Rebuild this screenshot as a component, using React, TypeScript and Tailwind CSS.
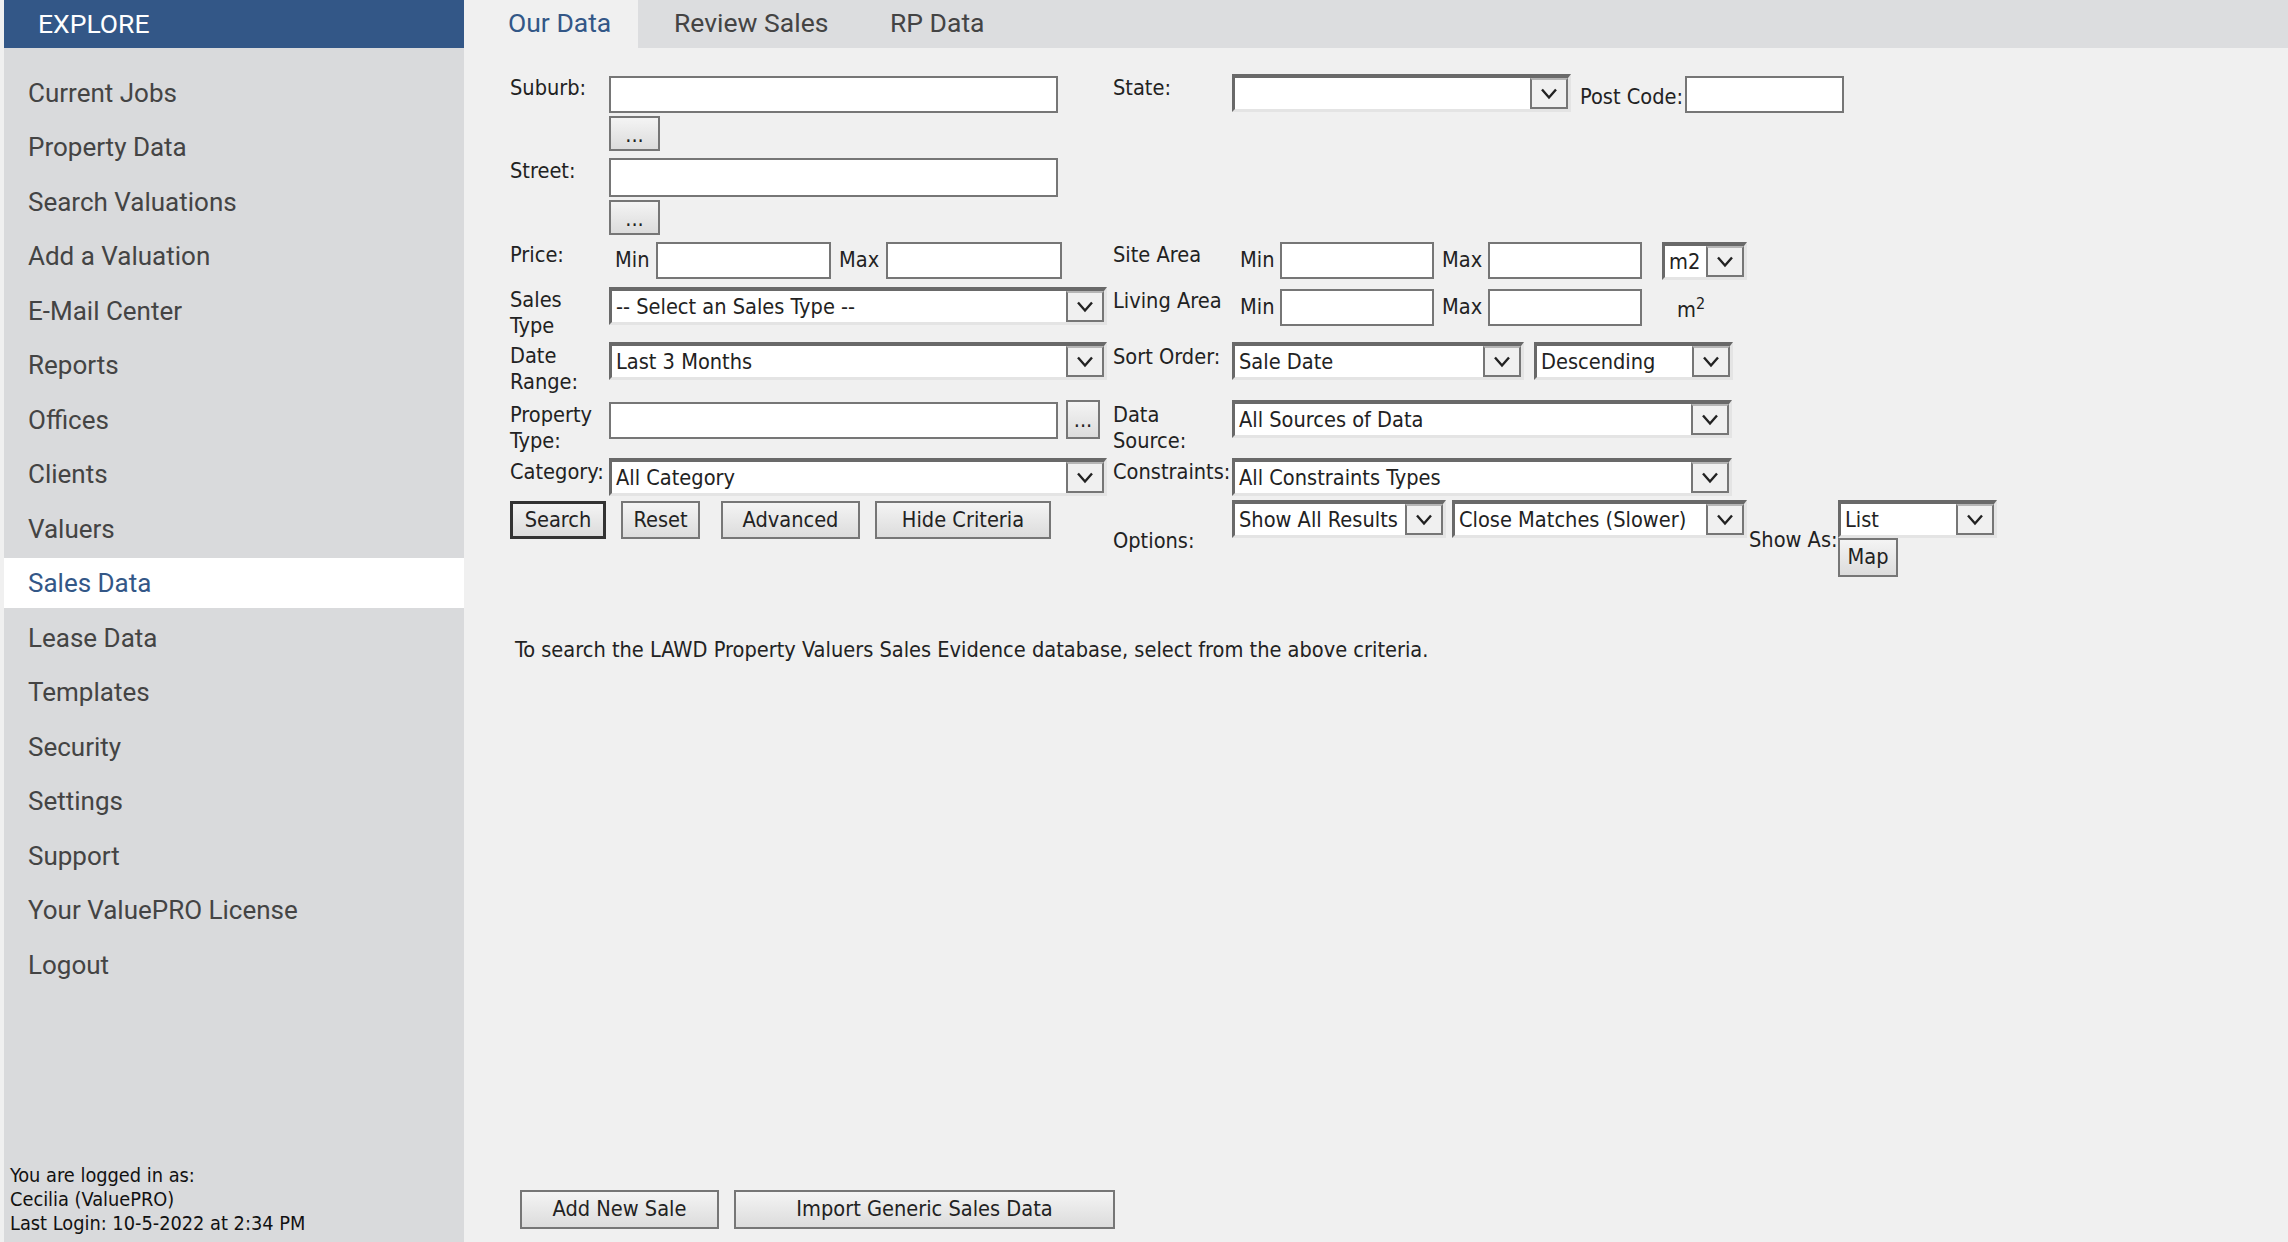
const menu = [
  "Current Jobs",
  "Property Data",
  "Search Valuations",
  "Add a Valuation",
  "E-Mail Center",
  "Reports",
  "Offices",
  "Clients",
  "Valuers",
  "Sales Data",
  "Lease Data",
  "Templates",
  "Security",
  "Settings",
  "Support",
  "Your ValuePRO License",
  "Logout",
];

function Chevron() {
  return (
    <svg width="20" height="13" viewBox="0 0 20 13" fill="none">
      <path d="M3 2.5 L10 10.5 L17 2.5" stroke="#222" strokeWidth="2.4" />
    </svg>
  );
}

function Select({ text, width, arrow = "w-[38px]" }: { text?: string; width: string; arrow?: string }) {
  return (
    <div className={`${width} h-[38px] shrink-0 flex bg-white border-[3px] border-t-[4px] border-l-[3px] border-t-[#696969] border-l-[#696969] border-r-[#e4e4e4] border-b-[#e4e4e4]`}>
      <div className="flex-1 pl-[4px] leading-[31px] whitespace-nowrap overflow-hidden">{text}</div>
      <div className={`${arrow} shrink-0 flex items-center justify-center bg-[#f0f0f0] border-2 border-t-[#b5b5b5] border-[#767676]`}>
        <Chevron />
      </div>
    </div>
  );
}

function Input({ width }: { width: string }) {
  return <input className={`${width} h-[37px] shrink-0 bg-white border-2 border-[#767676] outline-none`} />;
}

function Btn({ children, className }: { children: React.ReactNode; className: string }) {
  return (
    <button className={`${className} shrink-0 border-2 border-[#767676] bg-gradient-to-b from-[#f4f4f4] to-[#dcdcdc] text-center text-[#222]`}>
      {children}
    </button>
  );
}

function Row({ height, left, center, right, rest }: { height: string; left: React.ReactNode; center: React.ReactNode; right: React.ReactNode; rest: React.ReactNode }) {
  return (
    <div className={`${height} flex`}>
      <div className="w-[99px] shrink-0 leading-[26px]">{left}</div>
      <div className="w-[504px] shrink-0">{center}</div>
      <div className="w-[119px] shrink-0 leading-[26px] whitespace-nowrap">{right}</div>
      <div className="flex-1">{rest}</div>
    </div>
  );
}

function MinMax({ width }: { width: string }) {
  return (
    <div className="flex items-center">
      <span className="w-[40px]">Min</span>
      <Input width={width} />
      <span className="w-[54px] pl-[8px]">Max</span>
      <Input width={width} />
    </div>
  );
}

export default function App() {
  return (
    <div className="w-[2288px] h-[1242px] flex overflow-hidden bg-[#f0f0f0] pl-[4px] font-['DejaVu_Sans_Condensed','DejaVu_Sans',sans-serif] text-[21.6px] text-[#222]">
      <aside className="w-[460px] shrink-0 flex flex-col bg-[#d9dadc]">
        <div className="h-[48px] shrink-0 bg-[#335787] pl-[34px] flex items-center font-['Roboto',sans-serif] text-[26.5px] text-white">EXPLORE</div>
        <nav className="pt-[19px] flex flex-col gap-[4.5px] font-['Roboto',sans-serif] text-[26px]">
          {menu.map((m) => (
            <div key={m} className={`h-[50px] pl-[24px] pt-[2px] flex items-center ${m === "Sales Data" ? "bg-white text-[#335787]" : "text-[#444]"}`}>
              {m}
            </div>
          ))}
        </nav>
        <div className="mt-auto pl-[6px] pb-[6px] text-[19.8px] leading-[24px] text-[#111]">
          <div>You are logged in as:</div>
          <div>Cecilia (ValuePRO)</div>
          <div>Last Login: 10-5-2022 at 2:34 PM</div>
        </div>
      </aside>

      <main className="flex-1 flex flex-col">
        <div className="h-[48px] shrink-0 flex bg-[#dcdddf] font-['Roboto',sans-serif] text-[26.5px] text-[#444]">
          <div className="w-[174px] pl-[44px] pb-[2px] flex items-center bg-[#f0f0f0] text-[#335787]">Our Data</div>
          <div className="w-[216px] pl-[36px] pb-[2px] flex items-center">Review Sales</div>
          <div className="pl-[36px] pb-[2px] flex items-center">RP Data</div>
        </div>

        <form className="pt-[26px] pl-[46px]">
          <Row
            height="h-[84px]"
            left={<div className="pt-[1px]">Suburb:</div>}
            center={
              <div className="pt-[2px] flex flex-col gap-[3px]">
                <Input width="w-[449px]" />
                <Btn className="w-[51px] h-[35px] leading-[34px]">...</Btn>
              </div>
            }
            right={<div className="pt-[1px]">State:</div>}
            rest={
              <div className="flex items-start">
                <Select width="w-[339px]" />
                <span className="pl-[9px] pt-[7px] w-[114px] whitespace-nowrap">Post Code:</span>
                <div className="pt-[2px]">
                  <Input width="w-[159px]" />
                </div>
              </div>
            }
          />
          <Row
            height="h-[84px]"
            left={<div>Street:</div>}
            center={
              <div className="flex flex-col gap-[3px]">
                <Input width="w-[449px] !h-[39px]" />
                <Btn className="w-[51px] h-[35px] leading-[34px]">...</Btn>
              </div>
            }
            right={null}
            rest={null}
          />
          <Row
            height="h-[45px]"
            left={<div>Price:</div>}
            center={
              <div className="pl-[6px] flex items-center">
                <span className="w-[41px]">Min</span>
                <Input width="w-[175px]" />
                <span className="w-[55px] pl-[8px]">Max</span>
                <Input width="w-[176px]" />
              </div>
            }
            right="Site Area"
            rest={
              <div className="pl-[8px] flex items-start">
                <MinMax width="w-[154px]" />
                <div className="pl-[20px]">
                  <Select width="w-[85px]" arrow="w-[38px]" text="m2" />
                </div>
              </div>
            }
          />
          <Row
            height="h-[55px]"
            left={<div>Sales<br />Type</div>}
            center={<Select width="w-[498px]" text="-- Select an Sales Type --" />}
            right={<div className="pt-[1px]">Living Area</div>}
            rest={
              <div className="pl-[8px] pt-[1px] flex items-center">
                <MinMax width="w-[154px]" />
                <span className="pl-[35px] pt-[6px]">m<sup className="text-[16px]">2</sup></span>
              </div>
            }
          />
          <Row
            height="h-[58px]"
            left={<div className="pt-[1px]">Date<br />Range:</div>}
            center={<Select width="w-[498px]" text="Last 3 Months" />}
            right={<div className="pt-[2px]">Sort Order:</div>}
            rest={
              <div className="flex gap-[10px]">
                <Select width="w-[292px]" text="Sale Date" />
                <Select width="w-[199px]" text="Descending" />
              </div>
            }
          />
          <Row
            height="h-[58px]"
            left={<div className="pt-[2px]">Property<br />Type:</div>}
            center={
              <div className="flex items-start gap-[8px] pt-[2px]">
                <Input width="w-[449px]" />
                <Btn className="w-[34px] h-[39px] -mt-[2px] leading-[36px]">...</Btn>
              </div>
            }
            right={<div className="pt-[2px]">Data<br />Source:</div>}
            rest={<Select width="w-[500px]" text="All Sources of Data" />}
          />
          <Row
            height="h-[42px]"
            left={<div className="pt-[1px]">Category:</div>}
            center={<Select width="w-[498px]" text="All Category" />}
            right={<div className="pt-[1px]">Constraints:</div>}
            rest={<Select width="w-[500px]" text="All Constraints Types" />}
          />
          <Row
            height="h-[78px]"
            left={
              <div className="pt-[1px]">
                <Btn className="w-[96px] h-[38px] !border-[3px] !border-[#333]">Search</Btn>
              </div>
            }
            center={
              <div className="pl-[12px] pt-[1px] flex">
                <Btn className="w-[79px] h-[38px]">Reset</Btn>
                <Btn className="w-[139px] h-[38px] ml-[21px]">Advanced</Btn>
                <Btn className="w-[176px] h-[38px] ml-[15px]">Hide Criteria</Btn>
              </div>
            }
            right={<div className="pt-[28px]">Options:</div>}
            rest={
              <div className="flex items-start">
                <Select width="w-[214px]" arrow="w-[38px]" text="Show All Results" />
                <div className="ml-[6px]">
                  <Select width="w-[295px]" text="Close Matches (Slower)" />
                </div>
                <span className="pl-[2px] pt-[24px] w-[91px] whitespace-nowrap">Show As:</span>
                <div className="flex flex-col">
                  <Select width="w-[159px]" text="List" />
                  <Btn className="w-[60px] h-[39px]">Map</Btn>
                </div>
              </div>
            }
          />
        </form>

        <p className="pl-[51px] pt-[59px] leading-[26px]">
          To search the LAWD Property Valuers Sales Evidence database, select from the above criteria.
        </p>

        <div className="mt-auto pb-[13px] pl-[56px] flex gap-[15px]">
          <Btn className="w-[199px] h-[39px]">Add New Sale</Btn>
          <Btn className="w-[381px] h-[39px]">Import Generic Sales Data</Btn>
        </div>
      </main>
    </div>
  );
}
